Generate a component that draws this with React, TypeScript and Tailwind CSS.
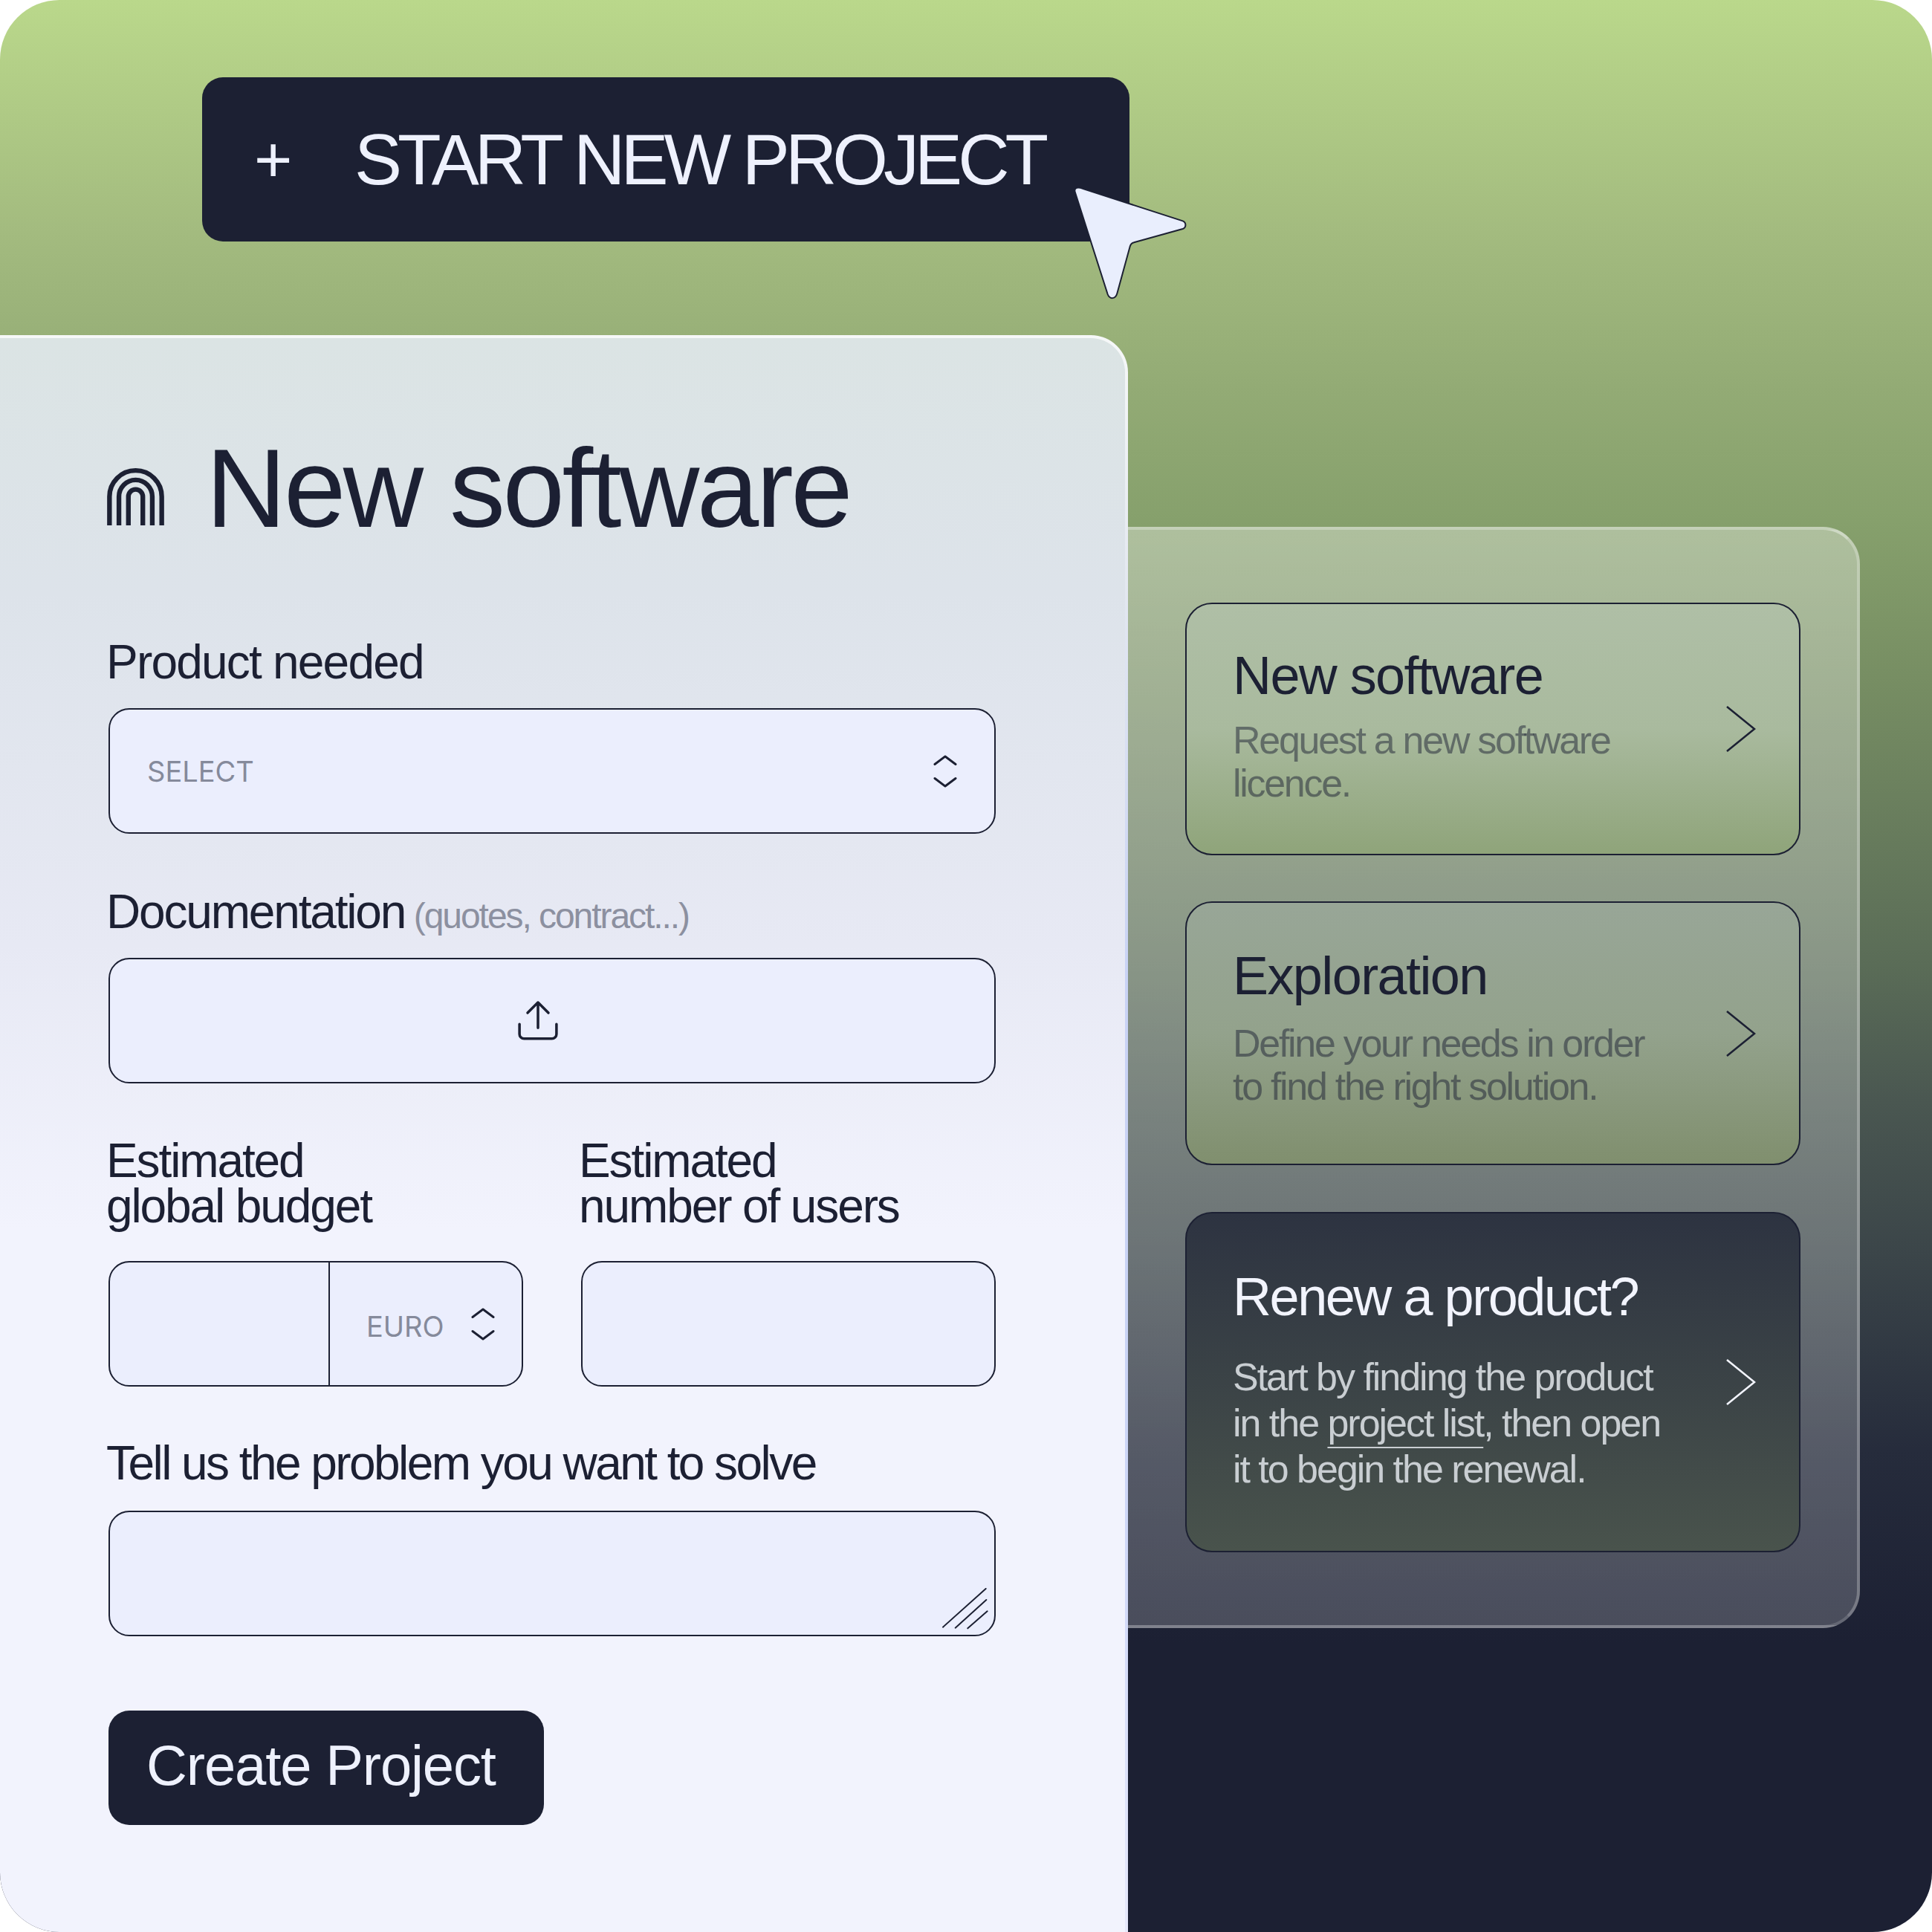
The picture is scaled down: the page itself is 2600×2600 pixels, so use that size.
const inputClass = "h-[169px] rounded-[28px] border-2 border-[#1c2033] bg-[#ebeefd]";
const labelClass = "-ml-[3px] text-[64px] leading-[61px] text-[#1c2033]";

function UpDown() {
  return (
    <svg width="32" height="46" viewBox="0 0 32 46" fill="none" stroke="#1c2033" strokeWidth="3" strokeLinecap="round" strokeLinejoin="round">
      <path d="M2 13.5 16 3l14 10.5" />
      <path d="M2 32.5 16 43l14-10.5" />
    </svg>
  );
}

function Chevron({ color = "#1c2033" }: { color?: string }) {
  return (
    <svg width="40" height="64" viewBox="0 0 40 64" fill="none" stroke={color} strokeWidth="2.6" className="shrink-0">
      <path d="M1 2l37 30L1 62" />
    </svg>
  );
}

function Logo() {
  return (
    <svg width="77" height="77" viewBox="0 0 230 230" fill="none" stroke="#1c2033" strokeWidth="19" className="-ml-[2px] mt-[22px] shrink-0">
      <path d="M10 230V114.5a105 105 0 0 1 210 0V230" />
      <path d="M48 230V114.5a67 67 0 0 1 134 0V230" />
      <path d="M86 230V114.5a29 29 0 0 1 58 0V230" />
    </svg>
  );
}

function Upload() {
  return (
    <svg width="56" height="56" viewBox="0 0 54 54" fill="none" stroke="#1c2033" strokeWidth="3.4" strokeLinecap="round" strokeLinejoin="round">
      <path d="M27 36V3M13.5 16.5 27 3l13.5 13.5" />
      <path d="M3 31v13a6 6 0 0 0 6 6h36a6 6 0 0 0 6-6V31" />
    </svg>
  );
}

function Cursor() {
  return (
    <svg width="300" height="220" viewBox="0 0 900 660" fill="#e9eefd" stroke="#1c2033" strokeWidth="6" className="absolute left-[1400px] top-[220px]">
      <path d="M140 115C136 102 146 95 160 98L575 232C590 238 590 258 575 264L378 319C370 321 365 326 362 335L310 525C303 549 280 549 272 528Z" />
    </svg>
  );
}

function Card({
  title,
  lines,
  height,
  className,
  gap,
}: {
  title: string;
  lines: string[];
  height: string;
  className: string;
  gap: string;
}) {
  return (
    <div className={`flex items-center justify-between rounded-[36px] border-2 border-[#1c2033] pl-[62px] pr-[58px] ${height} ${className}`}>
      <div className={gap}>
        <h3 className="text-[72px] leading-[80px] tracking-[-0.022em] text-[#1c2033]">{title}</h3>
        <p className="text-[52px] leading-[58px] tracking-[-0.044em] text-[#1c2033]/50">
          {lines.map((line) => (
            <span key={line} className="block">
              {line}
            </span>
          ))}
        </p>
      </div>
      <Chevron />
    </div>
  );
}

export default function App() {
  return (
    <div className="h-[2600px] w-[2600px] bg-white">
      <div className="relative h-full overflow-hidden rounded-[80px] bg-[linear-gradient(180deg,#bad88b_0%,#a3bb7f_12%,#93ab75_20%,#86a06c_27%,#778e63_35%,#5a6c57_50%,#4a5751_57%,#3b4549_65%,#262c3c_75%,#1c2033_85%,#1c2033_100%)] pt-[104px] font-['Liberation_Sans',Arial,sans-serif]">
        <button
          type="button"
          className="ml-[272px] flex h-[221px] w-[1248px] items-center rounded-[28px] bg-[#1c2033] pl-[70px] text-[#eef1fd]"
        >
          <span className="w-[135px] text-left text-[88px] leading-none">+</span>
          <span className="text-[96px] leading-none tracking-[-0.062em]">START NEW PROJECT</span>
        </button>

        <div className="mt-[126px] flex items-start">
          <div className="h-[2149px] w-[1518px] shrink-0 rounded-tr-[50px] border-r-4 border-t-4 border-transparent pl-[146px] pr-[174px] [background:linear-gradient(180deg,#dbe4e4_0%,#dde3ea_16%,#e7e9f4_38%,#f2f3fd_56%,#f2f3fd_100%)_padding-box,linear-gradient(180deg,#f6f8f8_0%,#e4e8f0_15%,#c9d3f5_40%,#c9d3f5_62%,#d0d8f8_77%,#e6e8fb_100%)_border-box]">
            <div className="flex items-center gap-[56px] pt-[132px]">
              <Logo />
              <h1 className="text-[150px] leading-[140px] tracking-[-0.023em] text-[#1c2033]">New software</h1>
            </div>

            <div className={`mt-[134px] tracking-[-0.028em] ${labelClass}`}>Product needed</div>
            <div className={`mt-[31px] flex items-center justify-between pl-[50px] pr-[50px] ${inputClass}`}>
              <span className="pt-[2px] font-['Inter',sans-serif] text-[38px] text-[#858a9b]">SELECT</span>
              <UpDown />
            </div>

            <div className={`mt-[75px] tracking-[-0.034em] ${labelClass}`}>
              Documentation{" "}
              <span className="-ml-[4px] text-[48px] tracking-[-0.043em] text-[#8c90a0]">(quotes, contract...)</span>
            </div>
            <div className={`mt-[26px] flex items-center justify-center pr-[38px] ${inputClass}`}>
              <Upload />
            </div>

            <div className="mt-[74px] grid grid-cols-[558px_558px] gap-x-[78px]">
              <div>
                <div className={`tracking-[-0.033em] ${labelClass}`}>
                  Estimated
                  <br />
                  global budget
                </div>
                <div className={`mt-[43px] flex overflow-hidden ${inputClass}`}>
                  <div className="w-[296px] border-r-2 border-[#1c2033]" />
                  <div className="flex flex-1 items-center justify-between pl-[49px] pr-[36px]">
                    <span className="pt-[8px] font-['Inter',sans-serif] text-[38px] text-[#858a9b]">EURO</span>
                    <UpDown />
                  </div>
                </div>
              </div>
              <div>
                <div className={`tracking-[-0.033em] ${labelClass}`}>
                  Estimated
                  <br />
                  number of users
                </div>
                <div className={`mt-[43px] ${inputClass}`} />
              </div>
            </div>

            <div className={`mt-[73px] tracking-[-0.04em] ${labelClass}`}>Tell us the problem you want to solve</div>
            <div className={`relative mt-[33px] ${inputClass}`}>
              <svg width="62" height="56" viewBox="0 0 186 168" fill="none" stroke="#1c2033" strokeWidth="6" strokeLinecap="round" className="absolute bottom-[7px] right-[8px]">
                <path d="M3 158 176 3" />
                <path d="M53 161 178 48" />
                <path d="M103 163 182 94" />
              </svg>
            </div>

            <button
              type="button"
              className="mt-[100px] h-[154px] w-[586px] rounded-[28px] bg-[#1c2033] pb-[6px] pl-[51px] text-left text-[76px] tracking-[-0.015em] text-[#eef1fd]"
            >
              Create Project
            </button>
          </div>

          <div className="mt-[258px] h-[1482px] w-[985px] rounded-r-[50px] border-y-4 border-r-4 border-b-white/15 border-r-white/25 border-t-white/40 bg-[linear-gradient(180deg,rgba(255,255,255,0.34),rgba(255,255,255,0.2))] pl-[77px] pr-[76px] pt-[98px]">
            <Card
              title="New software"
              lines={["Request a new software", "licence."]}
              height="h-[340px]"
              gap="pb-[10px] [&>h3]:mb-[18px]"
              className="bg-[linear-gradient(180deg,#afbfa6_0%,#a9ba9e_50%,#8fa47a_100%)]"
            />
            <div className="h-[62px]" />
            <Card
              title="Exploration"
              lines={["Define your needs in order", "to find the right solution."]}
              height="h-[355px]"
              gap="pb-[18px] [&>h3]:mb-[22px]"
              className="bg-[linear-gradient(180deg,#98a697_0%,#93a28c_50%,#808f6e_100%)]"
            />
            <div className="h-[63px]" />
            <div className="flex h-[458px] items-center justify-between rounded-[36px] border-2 border-[#1c2033] bg-[linear-gradient(180deg,#2d3341,#49534c)] pl-[62px] pr-[58px]">
              <div className="pb-[7px]">
                <h3 className="mb-[37px] text-[72px] leading-[80px] tracking-[-0.034em] text-[#f2f4fd]">Renew a product?</h3>
                <p className="text-[52px] leading-[62px] tracking-[-0.039em] text-[#c9ced2]">
                  Start by finding the product
                  <br />
                  in the <span className="underline decoration-2 underline-offset-[14px]">project list</span>, then open
                  <br />
                  it to begin the renewal.
                </p>
              </div>
              <Chevron color="#f2f4fd" />
            </div>
          </div>
        </div>

        <Cursor />
      </div>
    </div>
  );
}
